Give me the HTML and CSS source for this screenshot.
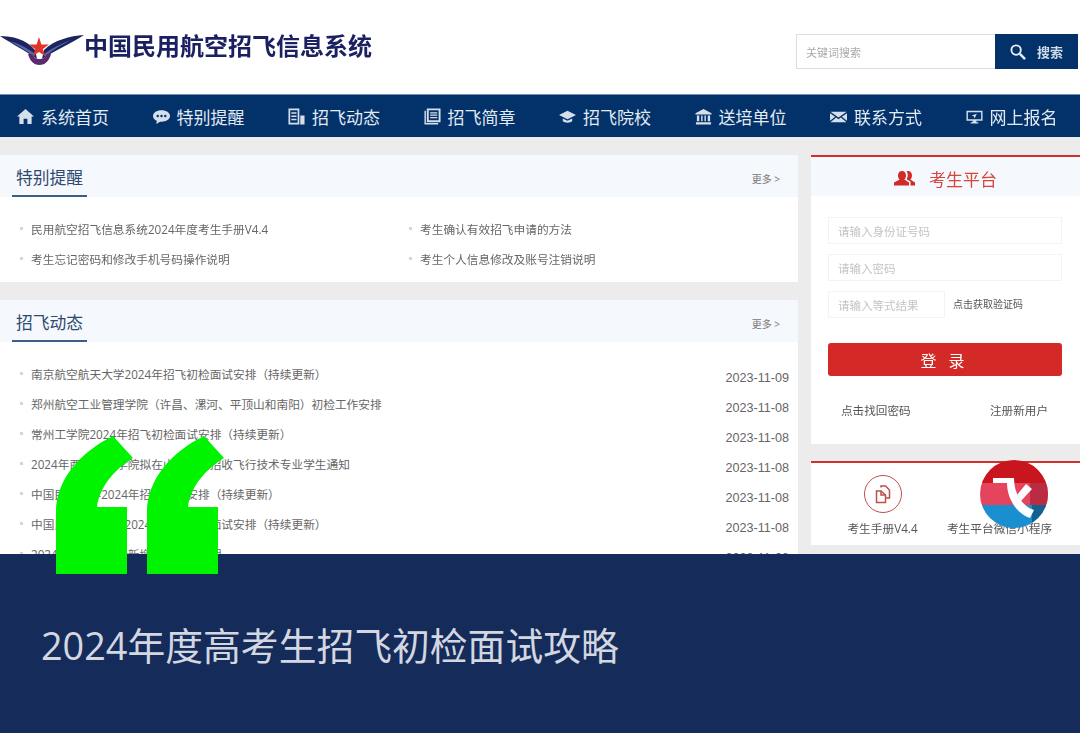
FILE: index.html
```html
<!DOCTYPE html>
<html lang="zh-CN">
<head>
    <meta charset="UTF-8">
    <title>中国民用航空招飞信息系统</title>
    <link rel="stylesheet" href="styles.css">
</head>
<body>

    <header class="top">
        <div class="brand">
            <svg class="brand-logo" width="84" height="32" viewBox="0 0 84 32">
                <path d="M0 2 C12 2 26 5 35 16 L37 25 C26 17 12 10 0 2Z" fill="#1c2560"/>
                <path d="M84 1 C70 2 54 6 44 16 L42 25 C54 17 72 9 84 1Z" fill="#1c2560"/>
                <path d="M9 7 C17 11 26 16 34 23 L35 20 C27 14 18 9 9 7Z" fill="#5a68a8"/>
                <path d="M72 6 C63 10 53 15 45 23 L44 20 C52 14 62 9 72 6Z" fill="#5a68a8"/>
                <path d="M28 20 C30 28 35 31 39.500 31 C44 31 49 28 51 20 L47 20 C45 24 43 25 39.500 25 C36 25 34 24 32 20Z" fill="#5b2a6e"/>
                <path d="M39 3 L41.400 10.500 L49 10.500 L42.800 15 L45 22 L39 18 L33 22 L35.200 15 L29 10.500 L36.600 10.500Z" fill="#e0352b"/>
            </svg>
            <span class="brand-name">中国民用航空招飞信息系统</span>
        </div>
        <form class="search">
            <input class="search-input" type="text" placeholder="关键词搜索">
            <button class="search-btn" type="button">
                <svg width="16" height="16" viewBox="0 0 17 17" fill="none" stroke="#e8eef5" stroke-width="2"><circle cx="6.500" cy="6.500" r="5"/><path d="M10.500 10.500 L16 16" stroke-width="2.600"/></svg>
                <span>搜索</span>
            </button>
        </form>
    </header>

    <nav class="nav">
        <a class="nav-item">
            <svg class="nav-icon" viewBox="0 0 18 18"><path d="M9 1 L18 9 L15.500 9 L15.500 17 L11 17 L11 11.500 L7 11.500 L7 17 L2.500 17 L2.500 9 L0 9Z"/></svg>
            系统首页
        </a>
        <a class="nav-item">
            <svg class="nav-icon" viewBox="0 0 18 18"><path d="M9 2.500 C14 2.500 18 5 18 8.500 C18 12 14 14.500 9 14.500 L7.500 14.500 L3.500 17 L4 13.600 C1.500 12.600 0 10.700 0 8.500 C0 5 4 2.500 9 2.500Z"/><circle cx="5" cy="8.500" r="1.300" fill="#03326b"/><circle cx="9" cy="8.500" r="1.300" fill="#03326b"/><circle cx="13" cy="8.500" r="1.300" fill="#03326b"/></svg>
            特别提醒
        </a>
        <a class="nav-item">
            <svg class="nav-icon" viewBox="0 0 18 18"><path d="M0.500 0.500 H12 V17.500 H0.500Z M2.300 2.300 V15.700 H10.200 V2.300Z M3.500 4.500 H9 V6 H3.500Z M3.500 8 H9 V9.500 H3.500Z M3.500 11.500 H9 V13 H3.500Z M13 8 H17.500 V17.500 H13Z" fill-rule="evenodd"/></svg>
            招飞动态
        </a>
        <a class="nav-item">
            <svg class="nav-icon" viewBox="0 0 18 18"><path d="M3 0.500 H17.500 V15 H3Z M5 2.500 V13 H15.500 V2.500Z M6.500 4.500 H14 V5.800 H6.500Z M6.500 7 H14 V8.300 H6.500Z M6.500 9.500 H14 V10.800 H6.500Z M0.500 3 H2 V16 H15 V17.500 H0.500Z" fill-rule="evenodd"/></svg>
            招飞简章
        </a>
        <a class="nav-item">
            <svg class="nav-icon" viewBox="0 0 18 18"><path d="M9 3 L18 7.500 L9 12 L0 7.500Z M4 11 L9 13.500 L14 11 L14 14 C12 16 6 16 4 14Z"/></svg>
            招飞院校
        </a>
        <a class="nav-item">
            <svg class="nav-icon" viewBox="0 0 18 18"><path d="M9 1 L17.500 5.500 V7 H0.500 V5.500Z M2 8 H4.500 V14 H2Z M6.500 8 H8 V14 H6.500Z M10 8 H11.500 V14 H10Z M13.500 8 H16 V14 H13.500Z M1 15 H17 V17.500 H1Z"/></svg>
            送培单位
        </a>
        <a class="nav-item">
            <svg class="nav-icon" viewBox="0 0 18 18"><path d="M0.500 4 H17.500 L9 10Z M0 5.500 L5.500 9.300 L0 13.500Z M18 5.500 L12.500 9.300 L18 13.500Z M6.500 10 L9 11.800 L11.500 10 L17.500 15 H0.500Z"/></svg>
            联系方式
        </a>
        <a class="nav-item">
            <svg class="nav-icon" viewBox="0 0 18 18"><path d="M0.500 3 H17.500 V13.500 H11 V15 H13 V16.500 H5 V15 H7 V13.500 H0.500Z M2 4.500 V12 H16 V4.500Z M11.500 6 L9 11 L8.300 8.800 L6 8Z" fill-rule="evenodd"/></svg>
            网上报名
        </a>
    </nav>

    <main class="main">
        <div class="left">
            <section class="card">
                <div class="card-head">
                    <h3 class="card-title">特别提醒</h3>
                    <a class="more">更多 &gt;</a>
                </div>
                <ul class="grid-list">
                    <li>民用航空招飞信息系统2024年度考生手册V4.4</li>
                    <li>考生确认有效招飞申请的方法</li>
                    <li>考生忘记密码和修改手机号码操作说明</li>
                    <li>考生个人信息修改及账号注销说明</li>
                </ul>
            </section>

            <section class="card">
                <div class="card-head">
                    <h3 class="card-title">招飞动态</h3>
                    <a class="more">更多 &gt;</a>
                </div>
                <ul class="news-list">
                    <li><span>南京航空航天大学2024年招飞初检面试安排（持续更新）</span><time>2023-11-09</time></li>
                    <li><span>郑州航空工业管理学院（许昌、漯河、平顶山和南阳）初检工作安排</span><time>2023-11-08</time></li>
                    <li><span>常州工学院2024年招飞初检面试安排（持续更新）</span><time>2023-11-08</time></li>
                    <li><span>2024年西安航空学院拟在山东等地招收飞行技术专业学生通知</span><time>2023-11-08</time></li>
                    <li><span>中国民航大学2024年招飞初检安排（持续更新）</span><time>2023-11-08</time></li>
                    <li><span>中国民航飞行学院2024年招飞初检面试安排（持续更新）</span><time>2023-11-08</time></li>
                    <li><span>2024年度招飞初检新增院校安排说明</span><time>2023-11-08</time></li>
                </ul>
            </section>
        </div>

        <aside class="right">
            <section class="panel">
                <div class="panel-head">
                    <svg width="21" height="16" viewBox="0 0 21 16" fill="#cf2b29"><path d="M8 1 C10.500 1 12 3 12 5.500 C12 7.500 11 9 10.300 9.500 L15 12.500 V15.500 H0 V12.500 L5.700 9.500 C5 9 4 7.500 4 5.500 C4 3 5.500 1 8 1Z"/><path d="M14 1 C16.500 1 18 3 18 5.500 C18 7.500 17 9 16.300 9.500 L21 12.500 V15.500 H16.500 V11.500 L12.500 9.200 C13.500 7.800 14 6.500 13.600 3.500 C13.500 2.500 13 1.800 12.500 1.300 C13 1.100 13.500 1 14 1Z"/></svg>
                    <span>考生平台</span>
                </div>
                <div class="login">
                    <input class="field" type="text" placeholder="请输入身份证号码">
                    <input class="field" type="text" placeholder="请输入密码">
                    <div class="captcha">
                        <input class="field field-short" type="text" placeholder="请输入等式结果">
                        <a>点击获取验证码</a>
                    </div>
                    <button class="login-btn" type="button">登 录</button>
                    <div class="login-links">
                        <a>点击找回密码</a>
                        <a>注册新用户</a>
                    </div>
                </div>
            </section>

            <section class="panel panel-links">
                <a class="quick">
                    <span class="quick-ring">
                        <svg width="16" height="20" viewBox="0 0 16 20" fill="none" stroke="#b9504c" stroke-width="1.500"><path d="M6 3.500 V2 H10.500 L14.500 6 V14 H11"/><path d="M1.500 7 H6 L10.500 11 V18.500 H1.500Z" fill="#fff"/><path d="M6 7 V11 H10.500"/></svg>
                    </span>
                    考生手册V4.4
                </a>
                <a class="quick quick-mini">考生平台微信小程序</a>
            </section>
        </aside>
    </main>

    <!-- cover graphics laid over the screenshot of the site -->
    <svg class="app-badge" width="68" height="68" viewBox="0 0 68 68">
        <defs><clipPath id="badgeClip"><circle cx="34" cy="34" r="34"/></clipPath></defs>
        <g clip-path="url(#badgeClip)">
            <rect width="68" height="23" fill="#c9151d"/>
            <rect y="23" width="68" height="22" fill="#e5455c"/>
            <rect x="50" y="23" width="18" height="22" fill="#b92c42"/>
            <rect y="45" width="68" height="23" fill="#1a8fd0"/>
            <rect x="52" y="45" width="16" height="23" fill="#14608f"/>
            <path d="M13 18 H34 C34 34 42 46 54 50 L50 58 C36 53 27 38 27 23 H13Z" fill="#fff"/>
            <path d="M46 24 L52 29 L41 41 L37 35Z" fill="#fff"/>
        </g>
    </svg>

    <div class="banner">
        <svg class="quote-mark" width="162" height="139" viewBox="0 0 162 139" fill="#00f400">
            <path d="M57 0 L77 22 C58 34 44 50 41 71 L71 71 V138 H0 V76 C0 44 24 16 57 0Z"/>
            <path d="M148 0 L168 22 C149 34 135 50 132 71 L162 71 V138 H91 V76 C91 44 115 16 148 0Z"/>
        </svg>
        <h1 class="banner-title">2024年度高考生招飞初检面试攻略</h1>
    </div>

</body>
</html>
```

FILE: styles.css
```css
* {
    box-sizing: border-box;
}
html, body {
    margin: 0;
    height: 733px;
    overflow: hidden;
}
body {
    position: relative;
    background-color: #ececec;
    font-family: "Open Sans", "Noto Sans CJK SC", sans-serif;
    color: #555;
}
ul {
    margin: 0;
    padding: 0;
    list-style: none;
}
a {
    color: inherit;
    text-decoration: none;
}

/* the site capture under the banner is a little soft */
.top, .nav, .main {
    filter: blur(0.4px);
}

/* header */
.top {
    height: 94px;
    background-color: #fff;
    display: flex;
    justify-content: space-between;
    padding: 32px 2px 0 0;
}
.brand {
    display: flex;
    align-items: flex-start;
}
.brand-logo {
    margin-top: 2px;
    flex: none;
}
.brand-name {
    font-size: 24px;
    line-height: 28px;
    font-weight: 700;
    color: #1b2160;
}
.search {
    display: flex;
    height: 35px;
    margin: 2px 0 0;
}
.search-input {
    width: 199px;
    height: 35px;
    border: 1px solid #ddd;
    border-right: none;
    padding: 2px 9px 0;
    font-size: 11px;
    font-family: inherit;
    outline: none;
}
.search-input::placeholder {
    color: #aaa;
}
.field::placeholder {
    color: #c4c4c4;
}
.search-btn {
    width: 83px;
    height: 35px;
    border: none;
    background-color: #03326b;
    color: #d0dbe8;
    font-family: inherit;
    font-size: 13px;
    font-weight: 700;
    display: flex;
    align-items: center;
    gap: 11px;
    padding: 0 0 0 15px;
}

/* nav */
.nav {
    height: 43px;
    background-color: #03326b;
    border-top: 1px solid #6f93b8;
    display: flex;
    align-items: center;
    padding-left: 17px;
}
.nav-item {
    width: 135.500px;
    flex: none;
    display: flex;
    align-items: center;
    gap: 7px;
    font-size: 17px;
    color: #e2eaf2;
}
.nav-icon {
    width: 17px;
    height: 17px;
    fill: #d5dfea;
    flex: none;
}

/* main columns */
.main {
    display: flex;
    justify-content: space-between;
    padding-top: 18px;
}
.left {
    width: 798px;
    display: flex;
    flex-direction: column;
    gap: 18px;
}
.right {
    width: 269px;
    display: flex;
    flex-direction: column;
    gap: 17px;
}
.card {
    background-color: #fff;
    padding-bottom: 8px;
}
.card-head {
    height: 42px;
    background-color: #f5f8fd;
    display: flex;
    justify-content: space-between;
    align-items: center;
    padding-right: 18px;
}
.card-title {
    margin: 0 0 0 12px;
    height: 42px;
    width: 75px;
    padding-left: 4px;
    font-size: 16.800px;
    line-height: 45px;
    font-weight: 400;
    color: #2f4a70;
    border-bottom: 2px solid #3d5f85;
}
.more {
    padding-top: 5px;
    font-size: 10px;
    color: #777;
}

/* lists */
.grid-list {
    display: grid;
    grid-template-columns: 389px 1fr;
    padding: 17px 0 0 31px;
}
.grid-list li,
.news-list li {
    position: relative;
    height: 30px;
    line-height: 30px;
    font-size: 11.700px;
    color: #666;
}
.grid-list li::before,
.news-list li::before {
    content: "";
    position: absolute;
    left: -11px;
    top: 13px;
    width: 3px;
    height: 3px;
    background-color: #d4d4d4;
}
.news-list {
    padding: 17px 9px 0 31px;
}
.news-list li {
    display: flex;
    justify-content: space-between;
}
.news-list time {
    font-family: "Liberation Sans", sans-serif;
    font-size: 12.600px;
    line-height: 38px;
}

/* right panels */
.panel {
    background-color: #fff;
    border-top: 2px solid #d0312f;
}
.panel-head {
    height: 39px;
    padding: 3px 0 0 83px;
    background-color: #f5f8fd;
    display: flex;
    align-items: center;
    gap: 14px;
    font-size: 17px;
    color: #d8453f;
}
.login {
    padding: 21px 18px 0 17px;
    height: 248px;
    display: flex;
    flex-direction: column;
}
.field {
    width: 234px;
    height: 27px;
    border: 1px solid #f3f3f3;
    margin-bottom: 10px;
    padding: 2px 9px 0;
    font-size: 11.500px;
    font-family: inherit;
    outline: none;
    flex: none;
}
.captcha {
    display: flex;
    font-size: 10px;
    line-height: 27px;
    color: #555;
}
.field-short {
    width: 117px;
    margin-bottom: 0;
    margin-right: 8px;
}
.login-btn {
    margin-top: 25px;
    width: 234px;
    height: 33px;
    border: none;
    border-radius: 3px;
    background-color: #d42a27;
    color: #fff;
    font-family: inherit;
    font-size: 16px;
    word-spacing: 8px;
    padding: 0 5px 0 0;
    flex: none;
}
.login-links {
    display: flex;
    justify-content: space-between;
    padding: 0 14px 0 13px;
    margin-top: 26px;
    font-size: 11.600px;
    line-height: 18px;
    color: #555;
}
.panel-links {
    height: 84px;
    display: flex;
    padding-top: 12px;
    font-size: 11.700px;
    color: #555;
    white-space: nowrap;
}
.quick {
    display: flex;
    flex-direction: column;
    align-items: center;
    width: 143px;
    flex: none;
}
.quick-mini {
    width: 105px;
    margin-left: -7px;
    padding-top: 44px;
}
.quick-ring {
    width: 38px;
    height: 38px;
    border: 1px solid #c0504c;
    border-radius: 50%;
    display: flex;
    align-items: center;
    justify-content: center;
    margin-bottom: 6px;
}

/* overlays */
.app-badge {
    position: absolute;
    left: 980px;
    top: 460px;
}
.banner {
    position: absolute;
    left: 0;
    right: 0;
    top: 554px;
    height: 179px;
    background-color: #152b5a;
}
.quote-mark {
    position: absolute;
    left: 56px;
    top: -118px;
    overflow: visible;
}
.banner-title {
    margin: 0;
    position: absolute;
    left: 41px;
    top: 65px;
    font-size: 37.800px;
    line-height: 54px;
    font-weight: 400;
    color: #d3d7e0;
    white-space: nowrap;
}
```
